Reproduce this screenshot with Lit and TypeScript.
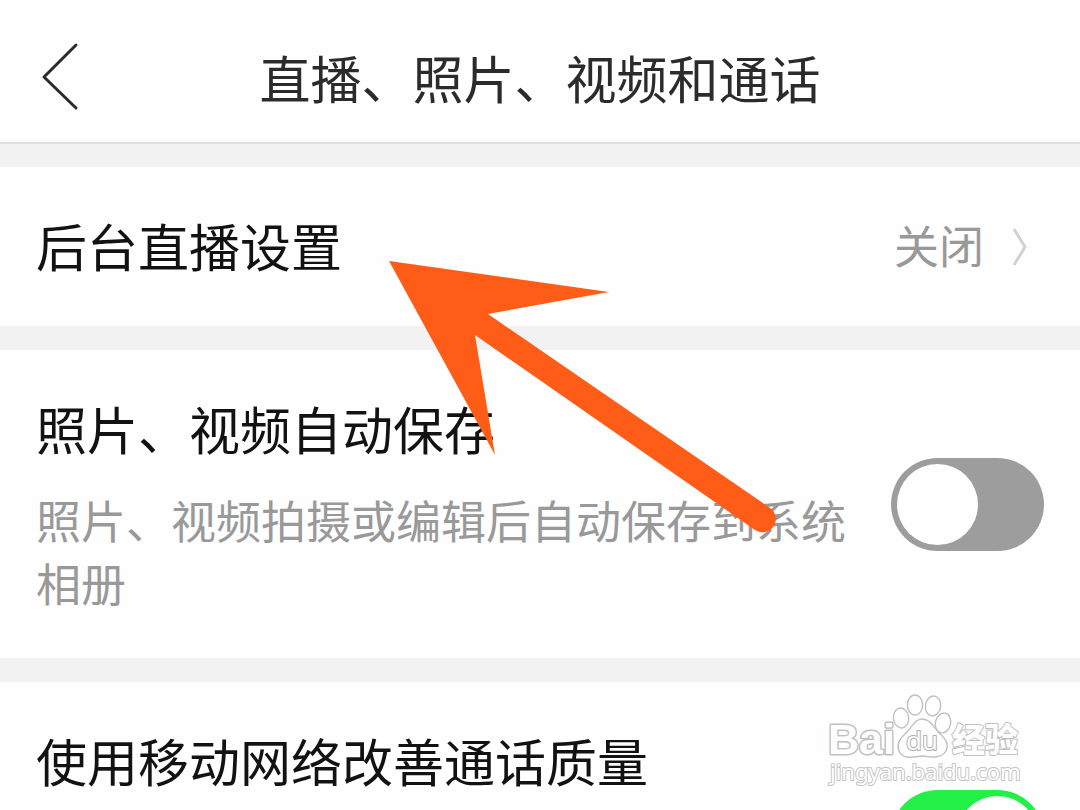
import { LitElement, html, css, svg, nothing } from "lit";
import { customElement, property } from "lit/decorators.js";

@customElement("switch-row")
class SwitchRow extends LitElement {
  @property() label = "";
  @property() note = "";
  @property({ type: Boolean }) on = false;

  static styles = css`
    :host { display: block; }
    .row {
      display: flex;
      align-items: center;
      gap: 32px;
      min-height: 308px;
      box-sizing: border-box;
      padding: 40px 36px;
      background: #fefefe;
    }
    .text {
      flex: 1;
      min-width: 0;
      align-self: flex-start;
      display: grid;
      gap: 22px;
    }
    .title { font-size: 51px; line-height: 76px; color: #121212; }
    .note { margin: 0; font-size: 45px; line-height: 63px; color: #999; }
    .switch {
      appearance: none;
      flex: none;
      display: flex;
      align-items: center;
      box-sizing: border-box;
      width: 153px;
      height: 93px;
      margin: 0;
      padding: 0 6px;
      border-radius: 47px;
      background: #9d9d9d;
      cursor: pointer;
    }
    .switch::before {
      content: "";
      width: 81px;
      height: 81px;
      border-radius: 50%;
      background: #fefefe;
    }
    .switch:checked { background: #22f046; justify-content: flex-end; }
  `;

  render() {
    return html`
      <div class="row">
        <div class="text">
          <label class="title" for="toggle">${this.label}</label>
          ${this.note ? html`<p class="note">${this.note}</p>` : nothing}
        </div>
        <input class="switch" id="toggle" type="checkbox" role="switch" .checked=${this.on} />
      </div>
    `;
  }
}

const toes = [
  [81, 38, -8],
  [95, 25, 0],
  [113, 26, 8],
  [123, 43, 14],
];

@customElement("app-root")
class AppRoot extends LitElement {
  static styles = css`
    :host {
      display: block;
      position: relative;
      height: 100vh;
      overflow: hidden;
      background: #f2f2f2;
      font-family: "Noto Sans CJK SC", sans-serif;
    }
    .bar {
      display: grid;
      grid-template-columns: 120px 1fr 120px;
      align-items: center;
      height: 144px;
      box-sizing: border-box;
      padding-top: 12px;
      background: #fefefe;
      border-bottom: 2px solid #dfdfdf;
    }
    .back {
      display: flex;
      align-self: start;
      border: 0;
      padding: 28px 38px;
      background: none;
      cursor: pointer;
    }
    .heading {
      margin: 0;
      text-align: center;
      font-size: 51px;
      line-height: 76px;
      font-weight: 400;
      color: #2b2b2b;
    }
    .list { display: grid; gap: 24px; padding-top: 23px; }
    .link {
      display: flex;
      align-items: center;
      height: 159px;
      box-sizing: border-box;
      padding: 0 52px 4px 36px;
      background: #fefefe;
      text-decoration: none;
      font-size: 51px;
      color: #121212;
    }
    .name { flex: 1; }
    .value { font-size: 45px; color: #999; margin-right: 28px; }
    .arrow { position: absolute; left: 389px; top: 261px; pointer-events: none; }
    .mark { position: absolute; left: 820px; top: 680px; pointer-events: none; }
    .outline { fill: #fefefe; stroke: #c0c0c0; stroke-width: 3px; paint-order: stroke; stroke-linejoin: round; }
    .shape { fill: #fefefe; stroke: #c0c0c0; stroke-width: 1.4px; }
    .latin { font: 700 43px "Liberation Sans", sans-serif; }
    .du { font: 400 26px "Open Sans", sans-serif; stroke-width: 2px; stroke: #b0b0b0; }
    .han { font: 900 33px "Noto Sans CJK SC", sans-serif; stroke-width: 2px; }
    .site { font: 400 22px "Noto Sans", sans-serif; stroke-width: 2px; stroke: #c4c4c4; }
  `;

  render() {
    return html`
      <header class="bar">
        <button class="back" aria-label="返回">
          <svg width="44" height="72" viewBox="0 0 44 72" fill="none" stroke="#2b2b2b" stroke-width="3" stroke-linecap="round" stroke-linejoin="round">
            <path d="M38 5 6 37 38 68" />
          </svg>
        </button>
        <h1 class="heading">直播、照片、视频和通话</h1>
      </header>
      <main class="list">
        <a class="link" href="#background">
          <span class="name">后台直播设置</span>
          <span class="value">关闭</span>
          <svg width="16" height="44" viewBox="0 0 16 44" fill="none" stroke="#d2d2d2" stroke-width="3">
            <path d="M2 6 13 24 2 42" />
          </svg>
        </a>
        <switch-row label="照片、视频自动保存" note="照片、视频拍摄或编辑后自动保存到系统相册"></switch-row>
        <switch-row label="使用移动网络改善通话质量" on></switch-row>
      </main>
      <svg class="arrow" width="390" height="275" viewBox="0 0 390 275" fill="#ff5d17" aria-hidden="true">
        <path d="M0 0 220 31 99 53 381 247A13 13 0 0 1 366 269L86 74 106 194Z" />
      </svg>
      <svg class="mark" width="220" height="110" viewBox="0 0 220 110" aria-hidden="true">
        <text class="outline latin" x="8" y="74">Bai</text>
        ${toes.map(([x, y, r]) => svg`<ellipse class="shape" cx=${x} cy=${y} rx="7.6" ry="10" transform="rotate(${r} ${x} ${y})" />`)}
        <path class="shape" d="M102 39C110 39 113 46 119 53C126 59 129 64 126 71C121 79 111 77 102 76C93 77 83 80 79 71C76 64 80 58 86 53C92 47 95 39 102 39Z" />
        <text class="outline du" x="86" y="70">du</text>
        <text class="outline han" x="132" y="72">经验</text>
        <text class="outline site" x="10" y="100">jingyan.baidu.com</text>
      </svg>
    `;
  }
}
